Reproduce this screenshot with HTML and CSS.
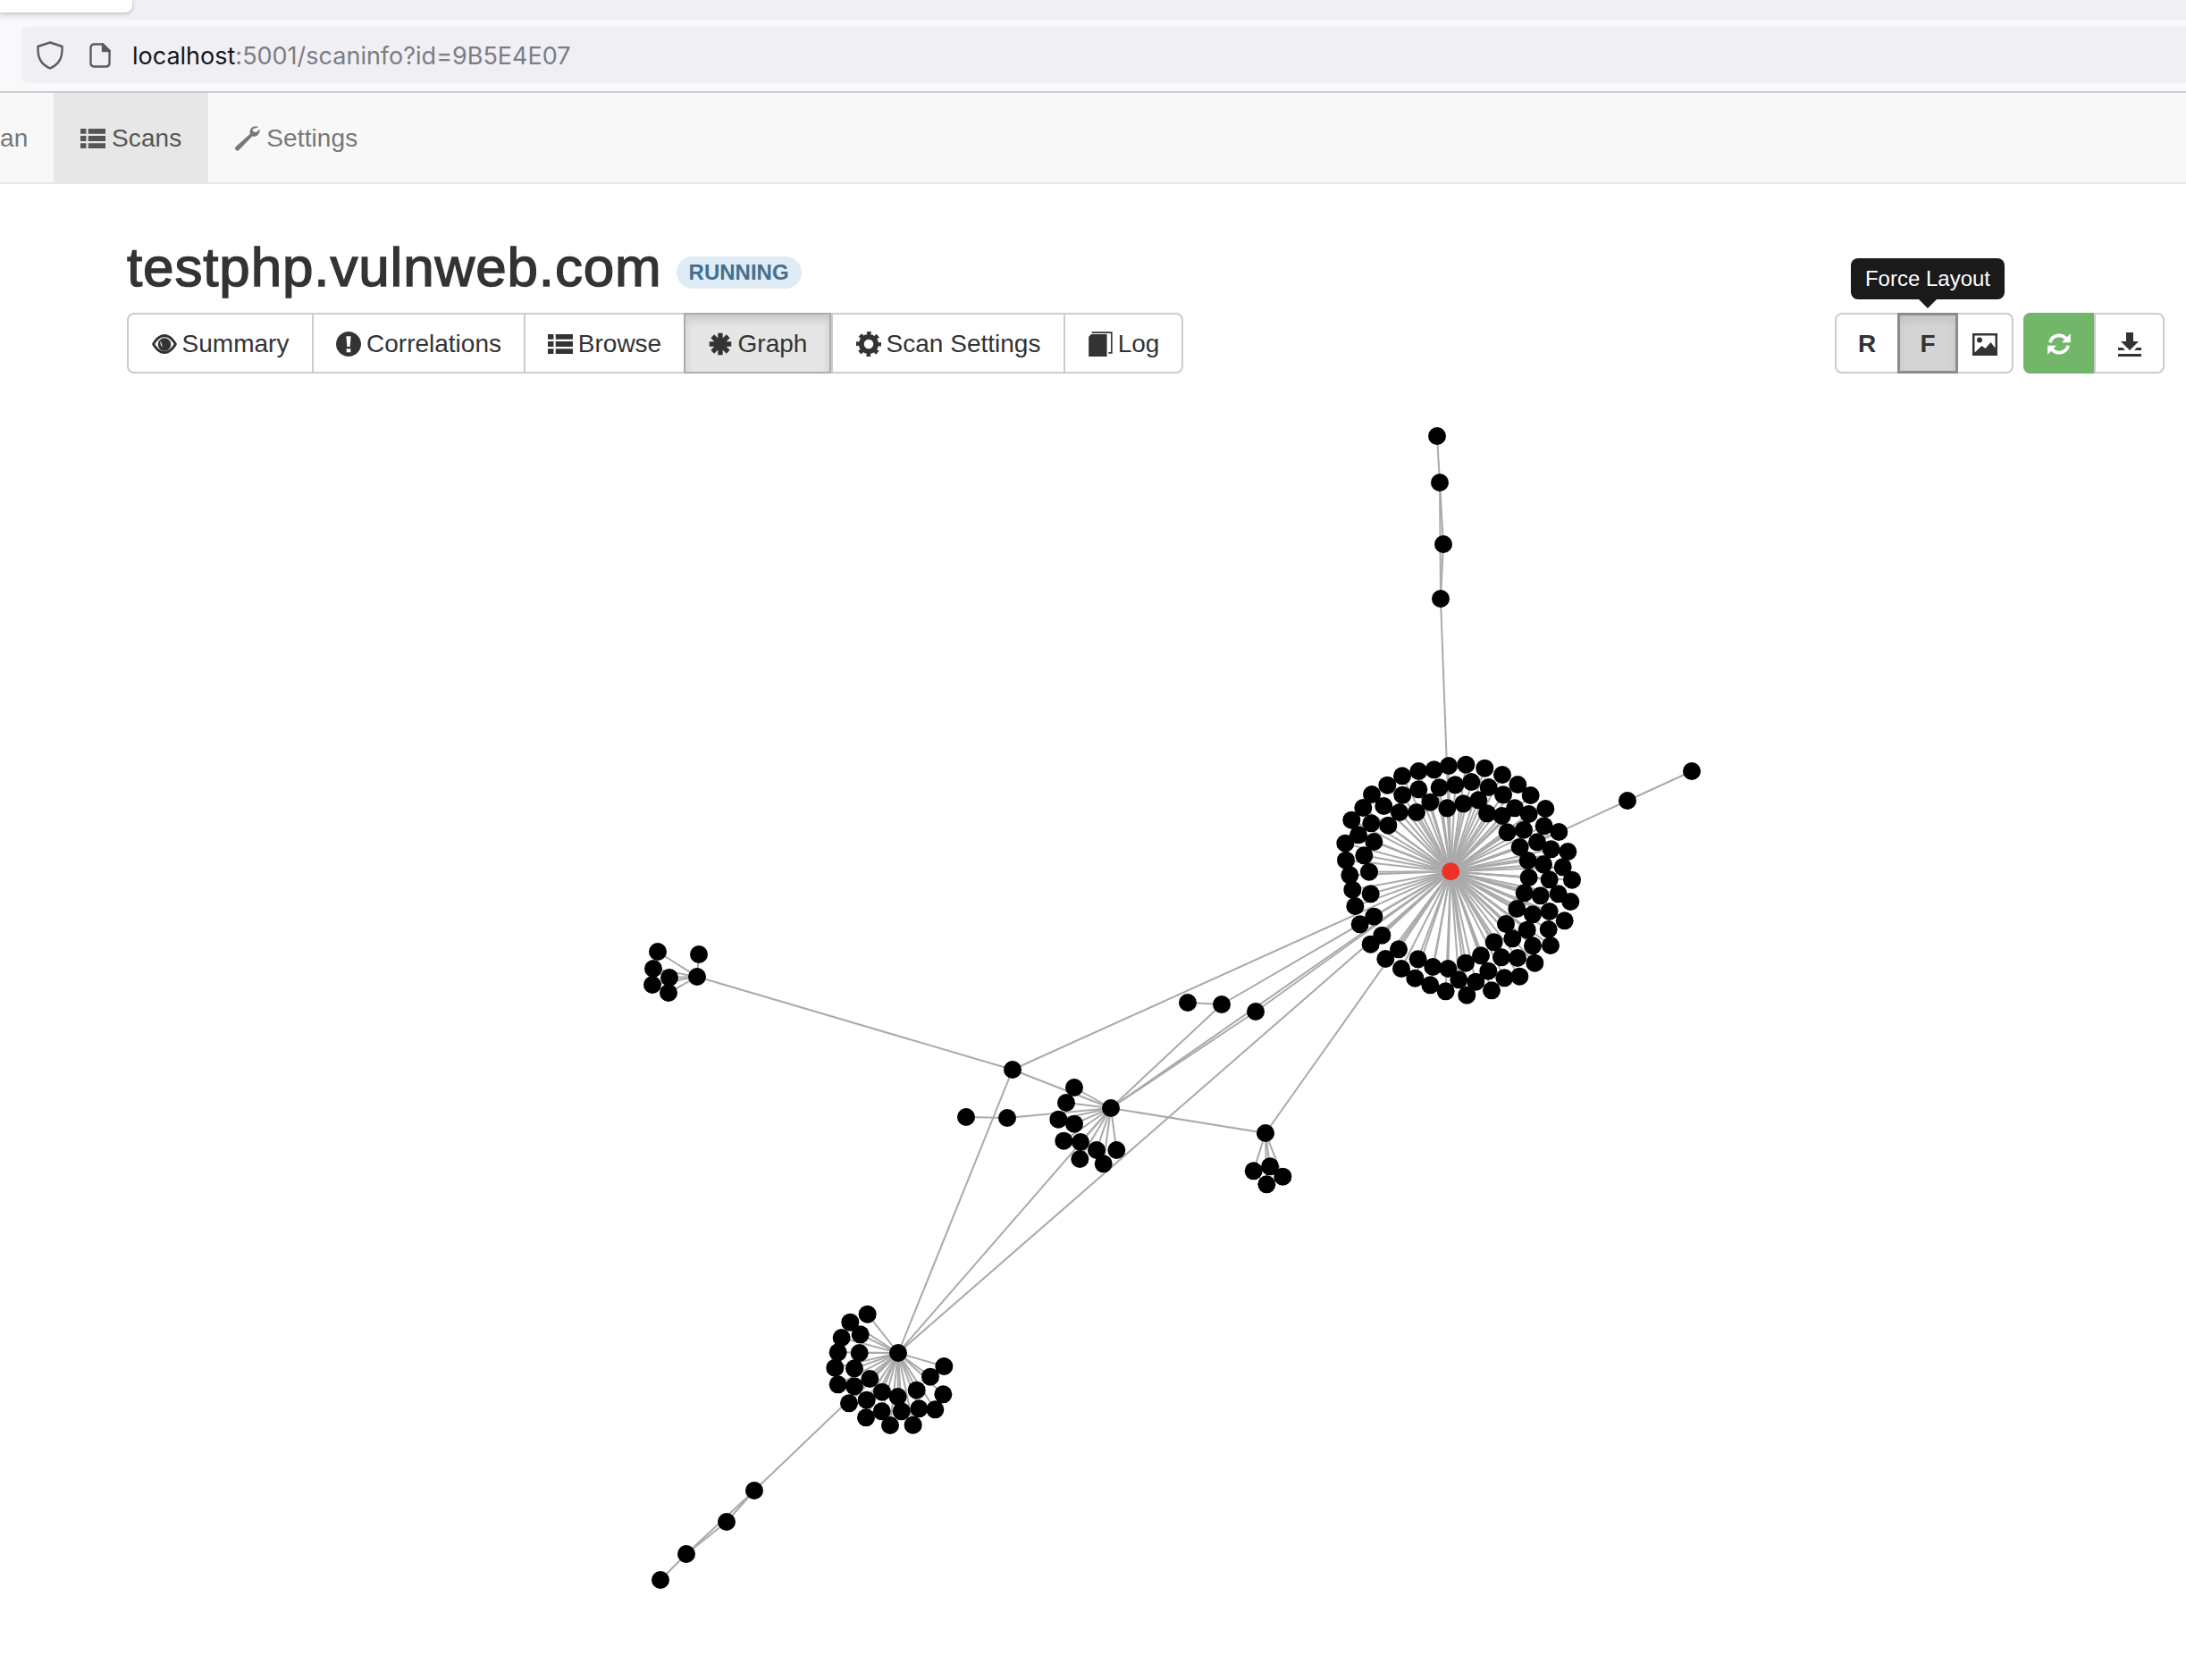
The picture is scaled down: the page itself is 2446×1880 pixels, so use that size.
FILE: index.html
```html
<!DOCTYPE html>
<html lang="en">
<head>
  <meta charset="UTF-8">
  <meta name="viewport" content="width=device-width, initial-scale=1.0">
  <title>testphp.vulnweb.com</title>
  <link rel="stylesheet" href="styles.css">
</head>
<body>
  <svg class="sprites" aria-hidden="true">
    <symbol id="i-list" viewBox="0 0 24 24">
      <path d="M0 2.500h5.500v5H0zM7.500 2.500H24v5H7.500zM0 9.500h5.500v5H0zM7.500 9.500H24v5H7.500zM0 16.500h5.500v5H0zM7.500 16.500H24v5H7.500z"/>
    </symbol>
    <symbol id="i-wrench" viewBox="0 0 24 24">
      <path d="M22.500 1C20.500-.2 17.500.2 15.800 2c-1.500 1.500-1.900 3.600-1.300 5.500L.8 19.800c-1 1-1 2.200-.1 3.200 1 1 2.200 1 3.200 0L16.500 9.800c1.900.5 3.900.1 5.300-1.300 1.500-1.500 2.200-3.300 1.700-5.200l-3.200 2.800-3-.8-.6-2.300z"/>
    </symbol>
    <symbol id="i-eye" viewBox="0 0 24 24">
      <path fill-rule="evenodd" d="M12 2.500C7 2.500 2.500 7 0 12c2.500 5 7 9.500 12 9.500s9.500-4.500 12-9.500c-2.500-5-7-9.500-12-9.500zM12 5.300c-3.800 0-7 3-9.200 6.700 2.200 3.700 5.400 6.700 9.200 6.700s7-3 9.200-6.700C19 8.300 15.800 5.300 12 5.300z"/>
      <path fill-rule="evenodd" d="M12 6.200a6.200 6.200 0 1 0 .01 0zM8.400 9c-.6 2-.2 4.400 1.900 6-.9-2.200-1-4.100-1.900-6z"/>
    </symbol>
    <symbol id="i-alert" viewBox="0 0 24 24">
      <path fill-rule="evenodd" d="M12 0a12 12 0 1 0 .01 0zM9.800 4.500h4.400l-.8 10h-2.800zM10 16.500h4v3.500h-4z"/>
    </symbol>
    <symbol id="i-asterisk" viewBox="0 0 24 24">
      <path d="M12 12V1.500M12 12v10.500M12 12H1.500M12 12h10.500M12 12 4.500 4.500M12 12l7.500-7.500M12 12l-7.500 7.500M12 12l7.500 7.500" stroke="currentColor" stroke-width="4.600" fill="none"/>
    </symbol>
    <symbol id="i-cog" viewBox="0 0 24 24">
      <circle cx="12" cy="12" r="7" fill="none" stroke="currentColor" stroke-width="5"/>
      <circle cx="12" cy="12" r="10" fill="none" stroke="currentColor" stroke-width="4" stroke-dasharray="3.850 4" stroke-dashoffset="1.900"/>
    </symbol>
    <symbol id="i-book" viewBox="0 0 24 24">
      <path d="M1 5 3.500 2.500H18.500V24H1z"/>
      <path d="M4 1h19v19.500h-3" fill="none" stroke="currentColor" stroke-width="1.400"/>
    </symbol>
    <symbol id="i-picture" viewBox="0 0 28 25">
      <path d="M0 0h28v25H0z"/>
      <path fill="#fff" d="M2.500 2.500h23v14l-5-6.500-6 7-4-3-8 7.500z"/>
      <circle cx="8" cy="7.500" r="3"/>
    </symbol>
    <symbol id="i-refresh" viewBox="0 0 24 24">
      <path d="M3.300 10.500A9 9 0 0 1 18.800 6.800M20.700 13.500A9 9 0 0 1 5.200 17.200" fill="none" stroke="currentColor" stroke-width="3.200"/>
      <path d="M23 2v8.500h-8.500zM1 22v-8.500h8.500z"/>
    </symbol>
    <symbol id="i-download" viewBox="0 0 26 27">
      <path d="M9 0h8v10h6L13 20 3 10h6z"/>
      <path d="M0 17h5l3 3H0v4h26v-4h-8l3-3h5v10H0z"/>
    </symbol>
  </svg>

  <div class="tabstrip"><div class="tab"></div></div>
  <div class="browserbar">
    <div class="urlbar">
      <svg class="shield" viewBox="0 0 30 32"><path d="M15 1.500 28.500 6c.5 12-2.500 19.500-13.500 24.500C4 25.500 1 18 1.500 6z"/></svg>
      <svg class="pageicon" viewBox="0 0 24 28"><path d="M5 1.500h10l7.500 7.500v14a4 4 0 0 1-4 3.500H5a4 4 0 0 1-3.500-3.500V5A4 4 0 0 1 5 1.500z"/><path class="fold" d="M15 1.500V9h7.500z"/></svg>
      <span class="urltext">localhost<span class="urlrest">:5001/scaninfo?id=9B5E4E07</span></span>
    </div>
  </div>

  <nav class="navbar">
    <a class="navitem navclip">an</a>
    <a class="navitem active"><svg class="icon"><use href="#i-list"/></svg> Scans</a>
    <a class="navitem"><svg class="icon"><use href="#i-wrench"/></svg> Settings</a>
  </nav>

  <main class="content">
    <div class="titlerow">
      <h1>testphp.vulnweb.com</h1>
      <span class="label">RUNNING</span>
    </div>
    <div class="actions">
      <div class="btngroup">
        <button class="btn tab-summary"><svg class="icon"><use href="#i-eye"/></svg> Summary</button>
        <button class="btn tab-corr"><svg class="icon"><use href="#i-alert"/></svg> Correlations</button>
        <button class="btn tab-browse"><svg class="icon"><use href="#i-list"/></svg> Browse</button>
        <button class="btn tab-graph selected"><svg class="icon"><use href="#i-asterisk"/></svg> Graph</button>
        <button class="btn tab-settings"><svg class="icon"><use href="#i-cog"/></svg> Scan Settings</button>
        <button class="btn tab-log"><svg class="icon"><use href="#i-book"/></svg> Log</button>
      </div>
      <div class="tools">
        <div class="btngroup">
          <button class="btn tool-r">R</button>
          <button class="btn tool-f pressed">F
            <span class="tooltip">Force Layout</span>
          </button>
          <button class="btn tool-pic"><svg class="icon"><use href="#i-picture"/></svg></button>
        </div>
        <div class="btngroup">
          <button class="btn tool-refresh"><svg class="icon"><use href="#i-refresh"/></svg></button>
          <button class="btn tool-download"><svg class="icon"><use href="#i-download"/></svg></button>
        </div>
      </div>
    </div>
  </main>

  <svg id="graph" class="graph" viewBox="0 440 2446 1440"></svg>

  <script src="graph.js"></script>
</body>
</html>
```

FILE: styles.css
```css
* {
    box-sizing: border-box;
}

html, body {
    margin: 0;
    height: 1880px;
    overflow: hidden;
    background-color: #ffffff;
}

body {
    font-family: "Liberation Sans", Arial, sans-serif;
    color: #333333;
}

.sprites {
    display: none;
}

.icon {
    width: 28px;
    height: 28px;
    fill: currentColor;
    vertical-align: -3px;
}

/* browser chrome */
.tabstrip {
    height: 22px;
    background-color: #f0f0f4;
}

.tab {
    width: 148px;
    height: 14px;
    background-color: #ffffff;
    border-radius: 0 0 8px 0;
    box-shadow: 0 1px 4px rgba(0, 0, 0, 0.25);
}

.browserbar {
    height: 82px;
    padding: 8px 0 0 24px;
    background-color: #f9f9fb;
    border-bottom: 2px solid #cccccc;
}

.urlbar {
    display: flex;
    align-items: center;
    height: 63px;
    padding-left: 17px;
    background-color: #f0f0f4;
    border-radius: 8px 0 0 8px;
}

.shield {
    width: 30px;
    height: 32px;
    fill: none;
    stroke: #5b5b66;
    stroke-width: 2.4;
}

.pageicon {
    width: 24px;
    height: 28px;
    margin-left: 29px;
    fill: none;
    stroke: #5b5b66;
    stroke-width: 2.4;
}

.pageicon .fold {
    fill: #5b5b66;
}

.urltext {
    margin-left: 24px;
    padding-top: 2px;
    font-family: "Inter", "Liberation Sans", sans-serif;
    font-size: 27px;
    color: #15141a;
}

.urlrest {
    color: #7d7c85;
}

/* app navbar */
.navbar {
    display: flex;
    height: 102px;
    background-color: #f8f8f8;
    border-bottom: 2px solid #e7e7e7;
}

.navitem {
    display: flex;
    align-items: center;
    gap: 7px;
    padding: 2px 30px 0;
    font-size: 28px;
    letter-spacing: 0.1px;
    color: #777777;
    white-space: nowrap;
}

.navclip {
    width: 60px;
    padding: 2px 0 0;
}

.navitem.active {
    background-color: #e7e7e7;
    color: #555555;
}

/* page */
.content {
    padding: 60px 24px 0 142px;
}

.titlerow {
    display: flex;
    align-items: center;
    height: 72px;
    gap: 16px;
}

h1 {
    margin: 0 0 8px;
    font-size: 62px;
    font-weight: 400;
    letter-spacing: 0.85px;
    -webkit-text-stroke: 1.4px #333333;
    color: #333333;
}

.label {
    width: 140px;
    height: 36px;
    margin-top: 6px;
    line-height: 36px;
    text-align: center;
    border-radius: 18px;
    background-color: #dfecf6;
    color: #44708f;
    font-size: 24px;
    font-weight: 700;
}

.actions {
    display: flex;
    justify-content: space-between;
    margin-top: 12px;
}

.tools {
    display: flex;
    gap: 11px;
}

.btngroup {
    display: flex;
    height: 68px;
    border: 2px solid #cccccc;
    border-radius: 8px;
    background-color: #ffffff;
}

.btn {
    position: relative;
    display: flex;
    align-items: center;
    justify-content: center;
    gap: 6px;
    margin: 0;
    padding: 2px 0 0;
    border: 0;
    border-left: 2px solid #cccccc;
    background: none;
    color: #333333;
    font-family: inherit;
    font-size: 28px;
    white-space: nowrap;
}

.btn:first-child {
    border-left: 0;
    border-radius: 6px 0 0 6px;
}

.tab-summary { width: 205px; }
.tab-corr { width: 237px; }
.tab-browse { width: 179px; }
.tab-graph { width: 165px; }
.tab-settings { width: 260px; }
.tab-log { width: 132px; }

.selected {
    margin: -2px 0;
    background-color: #e6e6e6;
    border: 2px solid #adadad;
    box-shadow: inset 0 6px 10px rgba(0, 0, 0, 0.125);
}

.tool-r, .tool-f {
    font-weight: 700;
}

.tool-r { width: 68px; border-left: 0; }
.tool-f { width: 68px; }
.tool-pic { width: 60px; border-left: 0; }
.tool-download { width: 77px; }

.pressed {
    margin: -2px 0;
    background-color: #d4d4d4;
    border: 3px solid #8c8c8c;
    box-shadow: inset 0 6px 10px rgba(0, 0, 0, 0.08);
}

.tool-pic .icon {
    width: 28px;
    height: 25px;
}

.tool-refresh {
    margin: -2px 0 -2px -2px;
    width: 79px;
    background-color: #72b669;
    color: #ffffff;
    border-radius: 8px 0 0 8px !important;
}

.tool-download .icon {
    width: 26px;
    height: 27px;
}

.tooltip {
    position: absolute;
    bottom: 80px;
    left: 50%;
    transform: translateX(-50%);
    width: 172px;
    height: 46px;
    line-height: 46px;
    text-align: center;
    background-color: #1a1a1a;
    color: #ffffff;
    border-radius: 8px;
    font-size: 24px;
    font-weight: 400;
}

.tooltip::after {
    content: "";
    position: absolute;
    top: 100%;
    left: 50%;
    margin-left: -10px;
    border: 10px solid transparent;
    border-top-color: #1a1a1a;
    border-bottom: 0;
}

/* graph */
.graph {
    display: block;
    width: 2446px;
    height: 1440px;
    margin-top: 22px;
}

.graph line {
    stroke: #aaaaaa;
    stroke-width: 2;
}

.graph circle {
    fill: #000000;
}

.graph circle.root {
    fill: #ee3124;
}
```

FILE: graph.js
```js
// node positions were read off 3x crops, so each cluster has its own offset
function scaled(list, ox, oy) {
  return list.map(([x, y]) => [x / 3 + ox, y / 3 + oy]);
}

const root = [1623.3, 975.3];
const hubA = [1133, 1197];
const hubB = [1243, 1240];
const hubC = [1416, 1268];
const hubD = [1005, 1514];
const hubE = [780, 1093];

const rootKids = scaled([
  [267,115],[322,99],[374,94],[423,81],[481,77],[544,89],[603,111],[655,144],[698,180],[748,225],
  [793,303],[823,369],[837,464],[832,537],[812,601],[765,684],[712,743],[661,788],[567,835],[484,851],
  [413,838],[361,817],[310,794],[264,762],[211,729],[161,680],[125,613],[109,552],[100,497],[91,448],
  [78,398],[76,341],[97,263],[136,222],[165,177],[217,146],[120,313],[163,274],[205,216],[268,179],
  [322,160],[392,154],[445,145],[499,135],[557,153],[606,178],[645,223],[692,243],[743,283],[720,337],
  [767,361],[806,421],[741,412],[761,463],[791,511],[731,517],[761,570],[705,580],[758,630],[686,632],
  [705,685],[637,661],[654,726],[600,724],[610,793],[556,770],[514,806],[457,799],[421,762],[370,756],
  [320,730],[255,697],[199,650],[172,587],[161,511],[156,437],[139,382],[172,336],[220,281],[258,237],
  [315,237],[361,203],[418,223],[472,208],[523,196],[552,241],[602,249],[620,304],[675,296],[662,354],
  [689,399],[692,456],[677,508],[652,561],[615,612],[575,673],[531,718],[480,743]
], 1480, 830);

const hubBKids = scaled([
  [216,411],[189,462],[163,518],[216,533],[181,590],[237,594],[235,651],[291,621],[314,667],[358,621]
], 1130, 1080);

const hubCKids = scaled([[818,691],[873,676],[916,710],[862,736]], 1130, 1080);

const hubDKids = scaled([
  [212,92],[154,119],[125,171],[188,160],[113,220],[185,222],[103,272],[168,274],[113,328],[168,334],
  [220,309],[150,391],[209,380],[261,353],[314,369],[207,439],[260,418],[288,465],[326,418],[377,347],
  [385,409],[365,464],[439,412],[466,361],[423,302],[469,267]
], 900, 1440);

const hubEKids = [[736,1065],[782,1068],[731,1084],[749,1094],[730,1102],[748,1111]];

const topChain = [[1608,488],[1611,540],[1615,609],[1612,670]];
const lowChain = [[844,1668],[813,1703],[768,1739],[739,1768]];
const right1 = [1821,896];
const right2 = [1893,863];
const loose1 = [1127,1251];
const loose2 = [1081,1250];
const top1 = [1329,1122];
const top2 = [1367,1124];
const top3 = [1405,1132];

const edges = [];
rootKids.forEach(n => edges.push([root, n]));
hubBKids.forEach(n => edges.push([hubB, n]));
hubCKids.forEach(n => edges.push([hubC, n]));
hubDKids.forEach(n => edges.push([hubD, n]));
hubEKids.forEach(n => edges.push([hubE, n]));

edges.push(
  [topChain[0], topChain[1]], [topChain[1], topChain[2]], [topChain[2], topChain[3]], [topChain[1], topChain[3]],
  [topChain[3], root],
  [hubD, lowChain[0]], [lowChain[0], lowChain[1]], [lowChain[0], lowChain[2]], [lowChain[1], lowChain[2]], [lowChain[2], lowChain[3]],
  [rootKids[49], right1], [right1, right2],
  [hubE, hubA], [hubA, root], [hubA, hubB], [hubA, hubD],
  [hubB, root], [hubB, top3], [top3, root], [hubB, top2], [top2, root], [top1, top2],
  [hubB, loose1], [loose1, loose2], [hubB, hubC], [hubC, root],
  [hubD, hubB], [hubD, root]
);

const nodes = [].concat(
  rootKids, hubBKids, hubCKids, hubDKids, hubEKids, topChain, lowChain,
  [hubA, hubB, hubC, hubD, hubE, right1, right2, loose1, loose2, top1, top2, top3]
);

const graph = document.getElementById('graph');
const NS = 'http://www.w3.org/2000/svg';

edges.forEach(([a, b]) => {
  const line = document.createElementNS(NS, 'line');
  line.setAttribute('x1', a[0]);
  line.setAttribute('y1', a[1]);
  line.setAttribute('x2', b[0]);
  line.setAttribute('y2', b[1]);
  graph.appendChild(line);
});

nodes.forEach(n => {
  const c = document.createElementNS(NS, 'circle');
  c.setAttribute('cx', n[0]);
  c.setAttribute('cy', n[1]);
  c.setAttribute('r', 10);
  graph.appendChild(c);
});

const r = document.createElementNS(NS, 'circle');
r.setAttribute('class', 'root');
r.setAttribute('cx', root[0]);
r.setAttribute('cy', root[1]);
r.setAttribute('r', 10);
graph.appendChild(r);
```
